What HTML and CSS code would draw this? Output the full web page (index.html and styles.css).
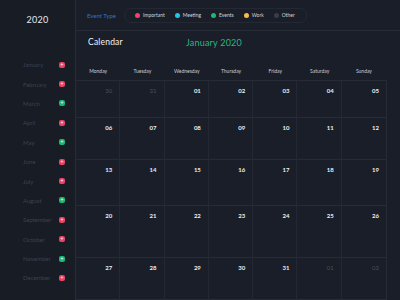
FILE: index.html
```html
<!DOCTYPE html>
<html>
<head>
    <title>Calendar</title>
    <link rel="stylesheet" href="styles.css">
</head>
<body>
    <div class="sidebar">
        <div class="year">2020</div>
        <ul class="months">
            <li><span>January</span><i class="badge red">+</i></li>
            <li><span>February</span><i class="badge red">+</i></li>
            <li><span>March</span><i class="badge green">+</i></li>
            <li><span>April</span><i class="badge red">+</i></li>
            <li><span>May</span><i class="badge green">+</i></li>
            <li><span>June</span><i class="badge red">+</i></li>
            <li><span>July</span><i class="badge red">+</i></li>
            <li><span>August</span><i class="badge green">+</i></li>
            <li><span>September</span><i class="badge red">+</i></li>
            <li><span>October</span><i class="badge red">+</i></li>
            <li><span>November</span><i class="badge green">+</i></li>
            <li><span>December</span><i class="badge red">+</i></li>
        </ul>
    </div>

    <div class="main">
        <div class="topbar">
            <span class="event-type">Event Type</span>
            <div class="legend">
                <span class="item"><i class="dot important"></i>Important</span>
                <span class="item"><i class="dot meeting"></i>Meeting</span>
                <span class="item"><i class="dot events"></i>Events</span>
                <span class="item"><i class="dot work"></i>Work</span>
                <span class="item"><i class="dot other"></i>Other</span>
            </div>
        </div>

        <div class="title-row">
            <span class="title">Calendar</span>
            <span class="month">January 2020</span>
        </div>

        <div class="weekdays">
            <span>Monday</span>
            <span>Tuesday</span>
            <span>Wednesday</span>
            <span>Thursday</span>
            <span>Friday</span>
            <span>Saturday</span>
            <span>Sunday</span>
        </div>

        <div class="grid">
            <div class="cell muted">30</div>
            <div class="cell muted">31</div>
            <div class="cell">01</div>
            <div class="cell">02</div>
            <div class="cell">03</div>
            <div class="cell">04</div>
            <div class="cell">05</div>

            <div class="cell">06</div>
            <div class="cell">07</div>
            <div class="cell">08</div>
            <div class="cell">09</div>
            <div class="cell">10</div>
            <div class="cell">11</div>
            <div class="cell">12</div>

            <div class="cell">13</div>
            <div class="cell">14</div>
            <div class="cell">15</div>
            <div class="cell">16</div>
            <div class="cell">17</div>
            <div class="cell">18</div>
            <div class="cell">19</div>

            <div class="cell">20</div>
            <div class="cell">21</div>
            <div class="cell">22</div>
            <div class="cell">23</div>
            <div class="cell">24</div>
            <div class="cell">25</div>
            <div class="cell">26</div>

            <div class="cell">27</div>
            <div class="cell">28</div>
            <div class="cell">29</div>
            <div class="cell">30</div>
            <div class="cell">31</div>
            <div class="cell muted">01</div>
            <div class="cell muted">02</div>
        </div>
    </div>
</body>
</html>
```

FILE: styles.css
```css
html, body {
    margin: 0;
    height: 300px;
    overflow: hidden;
}

body {
    display: flex;
    background-color: #191e28;
    font-family: Lato, "Open Sans", sans-serif;
    color: #ffffff;
}

/* Sidebar */
.sidebar {
    width: 75px;
    flex-shrink: 0;
    background-color: #171c25;
    border-right: 1px solid #262b36;
}

.year {
    text-align: center;
    font-size: 9px;
    line-height: 12px;
    padding-top: 14px;
    color: #e6e8ec;
    letter-spacing: 0.3px;
}

.months {
    list-style: none;
    margin: 0;
    padding: 29px 0 0 23px;
}

.months li {
    display: flex;
    align-items: center;
    justify-content: space-between;
    width: 42px;
    height: 19.4px;
    font-size: 6px;
    color: #3d4350;
}

.badge {
    display: flex;
    align-items: center;
    justify-content: center;
    width: 6px;
    height: 6px;
    border-radius: 2px;
    font-style: normal;
    font-size: 5px;
    line-height: 6px;
    color: #ffffff;
}

.badge.red {
    background-color: #e8436b;
}

.badge.green {
    background-color: #1db67a;
}

/* Main */
.main {
    flex: 1;
    display: flex;
    flex-direction: column;
}

.topbar {
    height: 30px;
    display: flex;
    align-items: center;
    padding-left: 11px;
    border-bottom: 1px solid #262b36;
}

.event-type {
    font-size: 6px;
    color: #3574c4;
    margin-right: 8px;
}

.legend {
    display: flex;
    align-items: center;
    height: 13px;
    padding: 0 11px 0 10px;
    border: 1px solid #232833;
    border-radius: 7px;
    gap: 10px;
}

.item {
    display: flex;
    align-items: center;
    font-size: 5px;
    color: #d3d6dc;
}

.dot {
    width: 5px;
    height: 5px;
    border-radius: 50%;
    margin-right: 3px;
}

.important { background-color: #f0436a; }
.meeting { background-color: #1fc7e6; }
.events { background-color: #1cb874; }
.work { background-color: #f7bb4c; }
.other { background-color: #383d48; }

.title-row {
    display: flex;
    align-items: center;
    height: 12px;
    padding: 5px 0 7px 12px;
}

.title {
    font-size: 8.5px;
    color: #f2f3f5;
    width: 98px;
    letter-spacing: 0.2px;
}

.month {
    font-size: 9px;
    color: #25b982;
    letter-spacing: 0.2px;
}

.weekdays {
    display: grid;
    grid-template-columns: repeat(7, 44.3px);
    height: 8px;
    line-height: 8px;
    padding: 12px 0 5px 0;
    font-size: 5px;
    color: #c9ccd3;
    text-align: center;
}

.grid {
    display: grid;
    width: 310px;
    grid-template-columns: repeat(7, 1fr);
    grid-template-rows: 37px 42px 46px 52px 1fr;
    flex: 1;
    border-top: 1px solid #262b36;
    border-right: 1px solid #262b36;
}

.cell {
    border-right: 1px solid #232833;
    border-bottom: 1px solid #262b36;
    text-align: right;
    padding: 7px 7px 0 0;
    font-size: 6px;
    line-height: 6px;
    font-weight: bold;
    color: #eceef2;
}

.cell:nth-child(7n) {
    border-right: none;
}

.cell.muted {
    color: #4a505c;
    font-weight: normal;
}
```
